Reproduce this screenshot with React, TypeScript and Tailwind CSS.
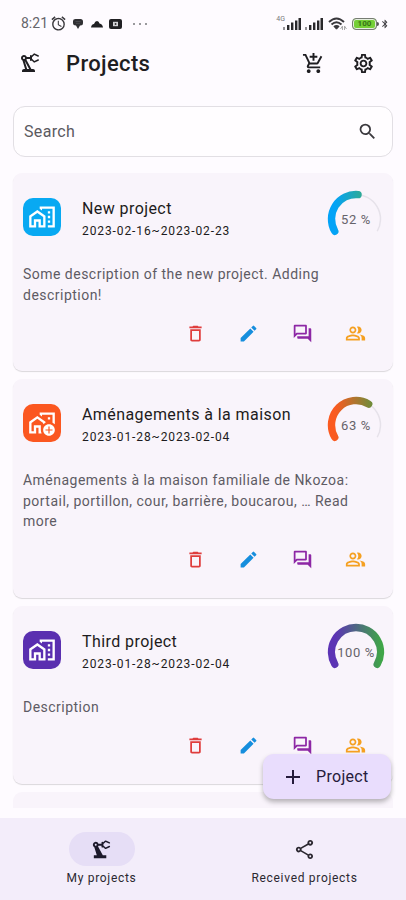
import type { ComponentType } from 'react';
import {
  MdAdd,
  MdAlarm,
  MdBluetooth,
  MdDeleteOutline,
  MdEdit,
  MdOutlineAddHomeWork,
  MdOutlineAddShoppingCart,
  MdOutlineMapsHomeWork,
  MdOutlinePeopleAlt,
  MdOutlinePrecisionManufacturing,
  MdOutlineQuestionAnswer,
  MdOutlineSettings,
  MdOutlineShare,
  MdPrecisionManufacturing,
  MdSearch,
} from 'react-icons/md';

type Project = {
  id: string;
  title: string;
  dates: string;
  lines: string[];
  percent: number;
  tile: string;
  from: string;
  to: string;
  Icon: ComponentType<{ size?: number }>;
};

const projects: Project[] = [
  {
    id: 'p1',
    title: 'New project',
    dates: '2023-02-16~2023-02-23',
    lines: ['Some description of the new project. Adding', 'description!'],
    percent: 52,
    tile: 'bg-[#08a9f2]',
    from: '#03a3f7',
    to: '#4caf50',
    Icon: MdOutlineMapsHomeWork,
  },
  {
    id: 'p2',
    title: 'Aménagements à la maison',
    dates: '2023-01-28~2023-02-04',
    lines: [
      'Aménagements à la maison familiale de Nkozoa:',
      'portail, portillon, cour, barrière, boucarou, … Read',
      'more',
    ],
    percent: 63,
    tile: 'bg-[#fb5720]',
    from: '#fb5a20',
    to: '#4c9840',
    Icon: MdOutlineAddHomeWork,
  },
  {
    id: 'p3',
    title: 'Third project',
    dates: '2023-01-28~2023-02-04',
    lines: ['Description'],
    percent: 100,
    tile: 'bg-[#5a2fb0]',
    from: '#5c33b5',
    to: '#3fa548',
    Icon: MdOutlineMapsHomeWork,
  },
];

// The dial sweeps 240 degrees, starting 30 degrees below the horizontal on the left.
function arc(fraction: number) {
  const point = (deg: number) => {
    const a = (deg * Math.PI) / 180;
    return `${(29 + 24.5 * Math.cos(a)).toFixed(2)} ${(29 + 24.5 * Math.sin(a)).toFixed(2)}`;
  };
  const sweep = 240 * fraction;
  return `M${point(150)} A24.5 24.5 0 ${sweep > 180 ? 1 : 0} 1 ${point(150 + sweep)}`;
}

function Gauge({ project }: { project: Project }) {
  const { id, percent, from, to } = project;
  return (
    <div className="relative mt-1 h-[58px] w-[58px]">
      <svg viewBox="0 0 58 58" className="h-[58px] w-[58px]">
        <defs>
          <linearGradient id={id} gradientUnits="userSpaceOnUse" x1="4" y1="0" x2="54" y2="0">
            <stop offset="0.08" stopColor={from} />
            <stop offset="1" stopColor={to} />
          </linearGradient>
        </defs>
        <path d={arc(1)} fill="none" stroke="#e6e2ea" strokeWidth="1.5" />
        <path d={arc(percent / 100)} fill="none" stroke={`url(#${id})`} strokeWidth="7.4" strokeLinecap="round" />
      </svg>
      <span className="absolute inset-0 flex items-center justify-center pt-0.5 text-[13px] tracking-[0.6px] whitespace-nowrap text-[#66636a]">
        {percent} %
      </span>
    </div>
  );
}

function Card({ project }: { project: Project }) {
  const { title, dates, lines, tile, Icon } = project;
  return (
    <article className="shrink-0 rounded-[9px] bg-[#f9f4fb] pt-[14px] shadow-[0_1px_1px_rgba(0,0,0,0.14)]">
      <div className="flex h-[60px] items-center pr-2 pl-2.5">
        <div className={`flex h-[38px] w-[38px] items-center justify-center rounded-[10px] text-white ${tile}`}>
          <Icon size={28} />
        </div>
        <div className="ml-[21px] flex-1 pt-[5px]">
          <h2 className="text-[16px] leading-[23px] tracking-[0.42px] whitespace-nowrap text-[#1d1b20]">{title}</h2>
          <p className="text-[12px] leading-[22px] tracking-[0.9px] text-[#1d1b20]">{dates}</p>
        </div>
        <Gauge project={project} />
      </div>
      <div className="mt-[17px] pl-2.5 text-[14px] leading-[20.6px] tracking-[0.48px] text-[#5e5b64]">
        {lines.map((line) => (
          <p key={line} className="whitespace-nowrap">{line}</p>
        ))}
      </div>
      <div className="mt-[18px] mb-7 flex h-5 items-center justify-end gap-[32.3px] pr-[27px]">
        <MdDeleteOutline size={21} className="text-[#df3d3d]" />
        <MdEdit size={21} className="text-[#168edd]" />
        <MdOutlineQuestionAnswer size={21} className="text-[#8d27a5]" />
        <MdOutlinePeopleAlt size={21} className="text-[#f5a021]" />
      </div>
    </article>
  );
}

function Signal() {
  return (
    <svg viewBox="0 0 18 12" className="h-3 w-[18px]" fill="#29282b">
      <rect x="0" y="9" width="2" height="3" opacity=".5" />
      <rect x="4" y="7" width="2.4" height="5" />
      <rect x="8" y="4.5" width="2.4" height="7.5" />
      <rect x="12" y="2.5" width="2.4" height="9.5" />
      <rect x="15.5" y="0" width="2.5" height="12" />
    </svg>
  );
}

function StatusBar() {
  return (
    <div className="flex h-[45px] items-center pt-0.5 pr-[20px] pl-[21px] text-[#39383c]">
      <span className="w-[29px] text-[14px] whitespace-nowrap text-[#66656a]">8:21</span>
      <MdAlarm size={17} />
      <svg viewBox="0 0 12 12" className="ml-[5px] h-3 w-3" fill="#303033">
        <path d="M1 3Q1 1 3.500 1H8.500Q11 1 11 3.500V5Q11 7.500 8.500 7.500H8L6 11 4 7.500Q1 7.500 1 5z" />
        <path d="M3.500 3.500h5M4 5.300h4" stroke="#55555a" strokeWidth=".7" />
      </svg>
      <svg viewBox="0 0 12 8" className="ml-[7px] h-2 w-3" fill="#202023">
        <path d="M0 7.500Q.5 4 3 4 4 1 6 1q2 0 2.500 2.500 3 .5 3.500 4z" />
      </svg>
      <svg viewBox="0 0 13 10" className="ml-[6px] h-2.5 w-[13px]">
        <rect width="13" height="10" rx="2" fill="#202023" />
        <path d="M4 2.800h5v4.400H4z" fill="#d5d5d8" />
        <path d="M5.800 3.700v2.600L8 5z" fill="#202023" />
      </svg>
      <span className="ml-[11px] flex gap-[4px]">
        <i className="h-0.5 w-0.5 bg-[#99999c]" />
        <i className="h-0.5 w-0.5 bg-[#99999c]" />
        <i className="h-0.5 w-0.5 bg-[#99999c]" />
      </span>
      <div className="ml-auto flex items-center">
        <span className="-mr-1.5 -mt-2 text-[7px] leading-none text-[#77777a]">4G</span>
        <span className="mr-[4px] ml-1"><Signal /></span>
        <Signal />
        <svg viewBox="0 0 19 14" className="ml-[5px] h-3.5 w-[19px]" fill="none" stroke="#39383c" strokeWidth="1.9">
          <path d="M1 5Q8.500-2 16 5M3.500 7.500Q8.500 3 13.500 7.500M6 10Q8.500 7.800 11 10" />
          <path d="M7 10.500 8.500 12.200 10 10.500z" fill="#39383c" strokeWidth="1" />
          <path d="m12.500 12 2-3v4m2 0V9l2 3" stroke="#aaa" strokeWidth="1" />
        </svg>
        <div className="ml-[5px] flex h-3 w-[25px] items-center justify-center rounded-[4px] border border-[#777c74] bg-[#75cf36] text-[8px] font-bold leading-none text-[#367313] ring-1 ring-[#e5eddf] ring-inset">100</div>
        <i className="h-1 w-[2px] rounded-r bg-[#555]" />
        <MdBluetooth size={10} className="ml-[1px] -mr-1" />
      </div>
    </div>
  );
}

export default function App() {
  return (
    <div className="relative flex h-[900px] w-[406px] flex-col overflow-hidden bg-[#fefbff] font-['Roboto','Liberation_Sans',sans-serif]">
      <StatusBar />
      <header className="flex h-9 items-center pr-[31px] pl-[18px] text-[#1f1e22]">
        <MdOutlinePrecisionManufacturing size={24} />
        <h1 className="ml-6 text-[22px] font-medium tracking-[0.35px]">Projects</h1>
        <MdOutlineAddShoppingCart size={23} className="ml-auto" />
        <MdOutlineSettings size={23} className="ml-[27px]" />
      </header>
      <main className="flex flex-1 flex-col overflow-hidden px-[13px] pt-[25px]">
        <div className="flex h-[51px] shrink-0 items-center justify-between rounded-[12px] border border-[#e2dfe4] bg-[#fffdff] pr-[14px] pl-[10px]">
          <span className="text-[16px] tracking-[0.35px] text-[#5b595f]">Search</span>
          <MdSearch size={21} className="text-[#3b393e]" />
        </div>
        <div className="mt-[15px] -mx-[13px] flex h-[636px] shrink-0 flex-col gap-[8px] overflow-hidden px-[13px] pt-px">
          {projects.map((project) => (
            <Card key={project.id} project={project} />
          ))}
          <div className="h-12 shrink-0 rounded-[9px] bg-[#f9f4fb]" />
        </div>
      </main>
      <button className="absolute top-[754px] left-[263px] flex h-[45px] w-[128px] items-center rounded-[11px] bg-[#e9ddfd] pl-[18px] text-[#251b3b] shadow-[0_3px_5px_rgba(0,0,0,0.28)]">
        <MdAdd size={24} />
        <span className="ml-[11px] text-[16px] tracking-[0.3px]">Project</span>
      </button>
      <nav className="flex h-[82px] shrink-0 bg-[#f3edfa] pt-[14px] text-[#2b2830]">
        <div className="flex w-[203px] flex-col items-center">
          <span className="flex h-[34px] w-[66px] items-center justify-center rounded-full bg-[#e6def6] text-[#1c192b]">
            <MdPrecisionManufacturing size={23} />
          </span>
          <span className="mt-[3px] text-[12px] leading-[18px] tracking-[0.7px]">My projects</span>
        </div>
        <div className="flex w-[203px] flex-col items-center">
          <span className="flex h-[34px] items-center"><MdOutlineShare size={23} /></span>
          <span className="mt-[3px] text-[12px] leading-[18px] tracking-[0.7px]">Received projects</span>
        </div>
      </nav>
    </div>
  );
}
